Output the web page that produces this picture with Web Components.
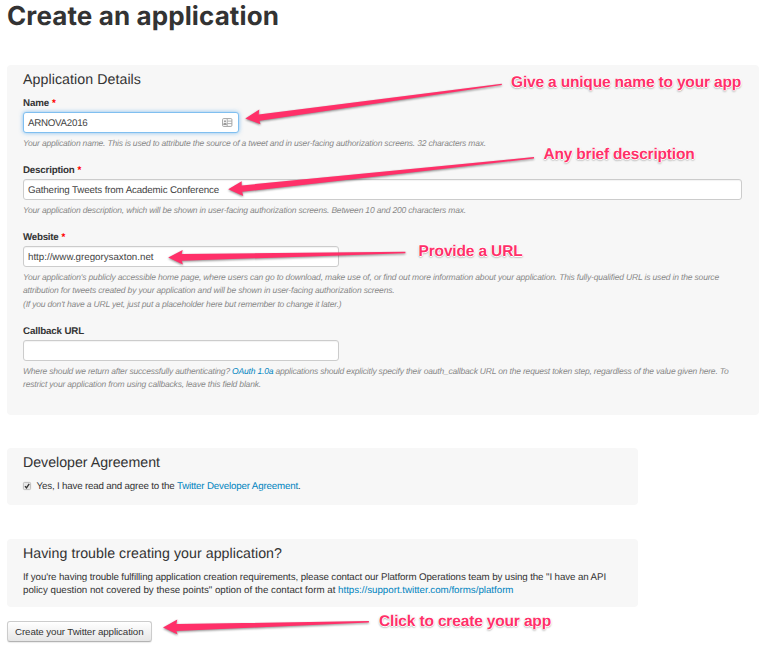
<!DOCTYPE html>
<html lang="en">
<head>
<meta charset="utf-8">
<title>Create an application</title>
<style>
body { margin: 0; background: #fff; color: #333; overflow: hidden; font: 9.75px/13.4px "Liberation Sans", Arial, sans-serif; text-rendering: geometricPrecision; }
</style>
</head>
<body>
<app-page></app-page>
<script>
// One line of text, tracked so that it spans the width given in "w".
class TextLine extends HTMLElement {
  constructor() {
    super();
    this.attachShadow({ mode: 'open' }).innerHTML =
      '<style>:host{display:block;white-space:nowrap}span{display:block;width:max-content;padding-top:1px;margin-bottom:-1px}</style><span><slot></slot></span>';
  }
  connectedCallback() {
    const want = parseFloat(this.getAttribute('w'));
    if (!want) return;
    const span = this.shadowRoot.querySelector('span');
    const have = span.getBoundingClientRect().width;
    span.style.letterSpacing = (want - have) / this.textContent.length + 'px';
  }
}

class FormPanel extends HTMLElement {
  constructor() {
    super();
    this.attachShadow({ mode: 'open' }).innerHTML = `
<style>
:host{display:block;box-sizing:border-box;background:#f7f7f7;border-radius:4px;padding:0 16px}
h2{margin:0;font-size:14.2px;font-weight:400;line-height:29px;height:31px}
</style>
<h2><slot name="title"></slot></h2><slot></slot>`;
  }
}

class FormField extends HTMLElement {
  constructor() {
    super();
    this.attachShadow({ mode: 'open' }).innerHTML = `
<style>
:host{display:block;margin-bottom:14px}
.label{display:flex;gap:3px;font-weight:700;height:13.2px}
.req{color:#f00;display:none;padding-top:1px}
:host([required]) .req{display:block}
.box{box-sizing:border-box;width:var(--field-width,316px);height:20.5px;margin:3px 0;padding:0 5px 0 4px;display:flex;align-items:center;justify-content:space-between;background:#fff;border:1px solid #ccc;border-radius:3px;color:#444;box-shadow:inset 0 1px 1px rgba(0,0,0,.05)}
:host([focused]) .box{border-color:#80bff0;box-shadow:0 0 4px rgba(82,168,236,.7)}
.help{font-size:8.5px;line-height:13.4px;font-style:italic;color:#888}
</style>
<div class="label"><slot name="label"></slot><span class="req">*</span></div>
<div class="box"><slot name="value"></slot><slot name="icon"></slot></div>
<div class="help"><slot></slot></div>`;
  }
}

class CardIcon extends HTMLElement {
  constructor() {
    super();
    this.attachShadow({ mode: 'open' }).innerHTML = `
<style>:host{display:block;width:11px;height:9px}svg{display:block}</style>
<svg width="11" height="9" viewBox="0 0 11 9"><rect x=".6" y=".6" width="9.3" height="7.8" rx="1" fill="#fff" stroke="#999" stroke-width=".9"/>
<path d="M5.2 1v7M5.4 3.1h4.4M5.4 5.6h4.4" stroke="#999" stroke-width=".8"/><circle cx="3" cy="3.2" r="1" fill="#999"/><path d="M1.2 6.9q0-2.2 1.8-2.2t1.8 2.2z" fill="#999"/></svg>`;
  }
}

class CheckMark extends HTMLElement {
  constructor() {
    super();
    this.attachShadow({ mode: 'open' }).innerHTML = `
<style>:host{display:block;width:8px;height:8px}svg{display:block;overflow:visible}</style>
<svg width="8" height="8" viewBox="0 0 8 8"><rect x=".4" y=".4" width="7.2" height="7.2" rx="1" fill="#e8e8e8" stroke="#b0b0b0" stroke-width=".8"/>
<path d="M2 4.1l1.5 1.8L6.2 1.8" fill="none" stroke="#333" stroke-width="1.3"/></svg>`;
  }
}

class PushButton extends HTMLElement {
  constructor() {
    super();
    this.attachShadow({ mode: 'open' }).innerHTML = `
<style>:host{display:block}
button{box-sizing:border-box;display:block;width:145px;height:20.5px;padding:0 7px;border:1px solid #ccc;border-bottom-color:#b3b3b3;border-radius:3px;background:linear-gradient(#fff,#e6e6e6);box-shadow:0 1px 1px rgba(0,0,0,.08);font:inherit;line-height:18px;color:#333;text-align:left}</style>
<button type="button"><slot></slot></button>`;
  }
}

// Callouts laid over the form: a free label and a tapered arrow.
class CalloutLayer extends HTMLElement {
  constructor() {
    super();
    this.attachShadow({ mode: 'open' }).innerHTML = `
<style>
:host{position:absolute;left:0;top:0;width:768px;height:649px;pointer-events:none}
svg{position:absolute;left:0;top:0;filter:drop-shadow(0 1px 1px rgba(0,0,0,.45))}
::slotted(text-line){position:absolute;font-size:15.5px;line-height:18px;font-weight:700;color:#ff3069;text-shadow:1px 0 #fff,-1px 0 #fff,0 1px #fff,0 -1px #fff,0 1px 2px rgba(0,0,0,.65)}
</style>
<svg width="768" height="649" viewBox="0 0 768 649" fill="#ff3069">
<path d="M245.3 118.6L259.3 109.5L258.7 114.4L501.8 83.7V85.1L259.5 120.7L260.5 124.2Z"/>
<path d="M228.2 189.3L241.7 181.2L241.7 185.4L534 157.1V158.5L242.2 191.8L243.2 195.9Z"/>
<path d="M168.2 257.4L182.7 249.9L181.7 254L405.4 251.8V253.2L181.8 260.7L182.9 264.6Z"/>
<path d="M163 627.4L177.3 619.4L176.4 624L368.9 621.1V622.5L176.4 631L177.6 634.5Z"/>
</svg><slot></slot>`;
  }
}

class AppPage extends HTMLElement {
  constructor() {
    super();
    this.attachShadow({ mode: 'open' }).innerHTML = `
<style>
:host{display:block;position:relative;box-sizing:border-box;width:768px;height:649px;padding:0 9px 0 7px;overflow:hidden}
h1{margin:0;height:65px;font:700 26px/31px Inter,sans-serif;color:#333}
a{color:#0084c0;text-decoration:none}
.details{height:350px}
.wide{--field-width:719px}
.narrow{--field-width:216px}
.agree{width:631px;height:57px;margin-top:33px}
.help{width:631px;height:67.5px;margin-top:34px;margin-bottom:14.5px}
.row{display:flex;gap:5.5px;align-items:center}
</style>
<h1><text-line w="272">Create an application</text-line></h1>
<form-panel class="details">
  <text-line slot="title" w="118">Application Details</text-line>
  <form-field class="narrow" required focused>
    <text-line slot="label" w="26">Name</text-line><text-line slot="value" w="59.5">ARNOVA2016</text-line><card-icon slot="icon"></card-icon>
    <text-line w="463">Your application name. This is used to attribute the source of a tweet and in user-facing authorization screens. 32 characters max.</text-line>
  </form-field>
  <form-field class="wide" required>
    <text-line slot="label" w="51.5">Description</text-line><text-line slot="value" w="191">Gathering Tweets from Academic Conference</text-line>
    <text-line w="443">Your application description, which will be shown in user-facing authorization screens. Between 10 and 200 characters max.</text-line>
  </form-field>
  <form-field required>
    <text-line slot="label" w="35.5">Website</text-line><text-line slot="value" w="125.5">http://www.gregorysaxton.net</text-line>
    <text-line w="696">Your application's publicly accessible home page, where users can go to download, make use of, or find out more information about your application. This fully-qualified URL is used in the source</text-line>
    <text-line w="371.5">attribution for tweets created by your application and will be shown in user-facing authorization screens.</text-line>
    <text-line w="318.5">(If you don't have a URL yet, just put a placeholder here but remember to change it later.)</text-line>
  </form-field>
  <form-field>
    <text-line slot="label" w="61">Callback URL</text-line>
    <text-line w="705.5">Where should we return after successfully authenticating? <a>OAuth 1.0a</a> applications should explicitly specify their oauth_callback URL on the request token step, regardless of the value given here. To</text-line>
    <text-line w="238">restrict your application from using callbacks, leave this field blank.</text-line>
  </form-field>
</form-panel>
<form-panel class="agree">
  <text-line slot="title" w="137">Developer Agreement</text-line>
  <div class="row"><check-mark></check-mark><text-line w="264">Yes, I have read and agree to the <a>Twitter Developer Agreement</a>.</text-line></div>
</form-panel>
<form-panel class="help">
  <text-line slot="title" w="259">Having trouble creating your application?</text-line>
  <text-line w="583">If you're having trouble fulfilling application creation requirements, please contact our Platform Operations team by using the "I have an API</text-line>
  <text-line w="490.5">policy question not covered by these points" option of the contact form at <a>https://support.twitter.com/forms/platform</a></text-line>
</form-panel>
<push-button><text-line w="128.5">Create your Twitter application</text-line></push-button>
<callout-layer>
  <text-line style="left:511px;top:73px" w="230">Give a unique name to your app</text-line>
  <text-line style="left:543.5px;top:145px" w="151">Any brief description</text-line>
  <text-line style="left:418.5px;top:242px" w="104">Provide a URL</text-line>
  <text-line style="left:379px;top:612px" w="172">Click to create your app</text-line>
</callout-layer>`;
  }
}

customElements.define('form-panel', FormPanel);
customElements.define('form-field', FormField);
customElements.define('card-icon', CardIcon);
customElements.define('check-mark', CheckMark);
customElements.define('push-button', PushButton);
customElements.define('callout-layer', CalloutLayer);
customElements.define('app-page', AppPage);
customElements.define('text-line', TextLine);
</script>
</body>
</html>
